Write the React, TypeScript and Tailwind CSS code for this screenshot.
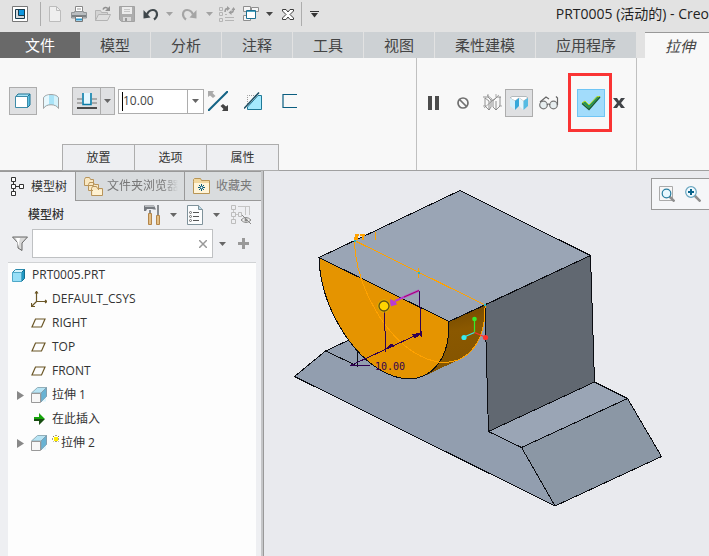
import React from "react";

type IconProps = { w?: number; h?: number; children: React.ReactNode };

function Icon({ w = 16, h = 16, children }: IconProps) {
  return (
    <svg width={w} height={h} viewBox={`0 0 ${w} ${h}`} fill="none" aria-hidden="true" className="block shrink-0">
      {children}
    </svg>
  );
}

function Caret({ color = "#666", w = 7 }: { color?: string; w?: number }) {
  return (
    <svg width={w} height="4" viewBox="0 0 7 4" aria-hidden="true" className="block shrink-0">
      <path d="M0 0h7L3.5 4z" fill={color} />
    </svg>
  );
}

function IconButton({ label, className = "", children }: { label: string; className?: string; children: React.ReactNode }) {
  return (
    <button type="button" aria-label={label} title={label} className={`flex shrink-0 items-center justify-center ${className}`}>
      {children}
    </button>
  );
}

function TitleBar() {
  return (
    <header className="flex h-8 items-center overflow-hidden pb-1">
      <IconButton label="应用程序窗口" className="h-6 w-10">
        <Icon>
          <path d="M.5.5h15v15H.5z" fill="#fff" stroke="#777" />
          <path d="M3.5 3.5h9v9h-9z" fill="#d5dade" stroke="#173b4c" />
          <path d="M6.500 3.500h6v6h-6z" fill="#0e97e0" stroke="#173b4c" />
        </Icon>
      </IconButton>
      <span className="mr-0.5 h-6 w-px bg-[#adadad]" />
      <IconButton label="新建" className="h-6 w-6">
        <Icon>
          <path d="M2.500.5h7l4 4v11h-11z" fill="#efefef" stroke="#bcbcbc" />
          <path d="M9.500.5v4h4" stroke="#bcbcbc" />
        </Icon>
      </IconButton>
      <IconButton label="打印" className="h-6 w-6">
        <Icon>
          <path d="M4.500.5h7v6h-7z" fill="#fff" stroke="#888" />
          <path d="M6 3h4" stroke="#999" />
          <path d="M.5 6.500h3v-1h9v1h3V12H.5z" fill="#b9bdc0" stroke="#909496" />
          <path d="M1 9h14v2H1z" fill="#7d8285" />
          <path d="M4.500 10.500h7v5h-7z" fill="#fff" stroke="#777" />
          <path d="M5 13.500h6" stroke="#2c9bd0" strokeWidth="2" />
        </Icon>
      </IconButton>
      <IconButton label="打开" className="h-6 w-6">
        <Icon>
          <path d="M.5 14.500v-10h5l1 2h6v3" fill="#d3d3d3" stroke="#b3b3b3" />
          <path d="M.5 14.500l3-6h12l-3 6z" fill="#dedede" stroke="#b3b3b3" />
          <path d="M8 3.500c1-2.500 3-2.500 5-1" stroke="#8f8f8f" strokeWidth="1.500" />
          <path d="M15 0v5h-5z" fill="#8f8f8f" />
        </Icon>
      </IconButton>
      <IconButton label="保存" className="h-6 w-6">
        <Icon>
          <path d="M.5.5h15v15h-13l-2-2z" fill="#adadad" stroke="#a2a2a2" />
          <path d="M3 1h10v7H3z" fill="#ececec" />
          <path d="M5 3.500h6M5 5.500h6" stroke="#c6c6c6" />
          <path d="M4 11h8v4H4z" fill="#d9d9d9" />
          <path d="M6 12h2v3H6z" fill="#999" />
        </Icon>
      </IconButton>
      <IconButton label="撤消" className="h-6 w-6">
        <Icon>
          <path d="M4 8.500C6 3 14 2 14 8.500c0 2-1 3.500-3 5" stroke="#3f474b" strokeWidth="2.200" />
          <path d="M.5 4v8.500l7-1z" fill="#3f474b" />
        </Icon>
      </IconButton>
      <IconButton label="撤消列表" className="h-6 w-3"><Caret color="#a3a3a3" /></IconButton>
      <IconButton label="重做" className="h-6 w-7">
        <Icon>
          <path d="M12 8.500C10 3 2 2 2 8.500c0 2 1 3.500 3 5" stroke="#a5a5a5" strokeWidth="2.200" />
          <path d="M15.500 4v8.500l-7-1z" fill="#a5a5a5" />
        </Icon>
      </IconButton>
      <IconButton label="重做列表" className="h-6 w-3"><Caret color="#a3a3a3" /></IconButton>
      <IconButton label="重新生成" className="h-6 w-6">
        <Icon>
          <path d="M.5 1.500h3v3h-3zM.5 6.500h3v3h-3zM.5 12.500h3v3h-3z" stroke="#b5b5b5" />
          <path d="M6 8.500h2M6 11.500h9M6 14.500h9" stroke="#b5b5b5" />
          <path d="M6 6c0-2.500 1-3.500 2.500-3.500M14.500 3c0 2.500-1 3.500-2.500 3.500" stroke="#9c9c9c" strokeWidth="1.500" />
          <path d="M8 0l3 2.500L8 5zM12.500 4l-3 2.500 3 2.500zM12.500 4l2-3 2 3z" fill="#9c9c9c" />
        </Icon>
      </IconButton>
      <IconButton label="窗口" className="h-6 w-6">
        <Icon>
          <path d="M.5.5h7v5h-7zM8.500 1.500h7v4h-7zM.5 9.500h7v5h-7z" fill="#f5f5f5" stroke="#8e8e8e" />
          <path d="M3.500 4.500h9v8h-9z" fill="#fff" stroke="#1b6f92" />
          <path d="M4 5.500h8" stroke="#4ea7c3" />
        </Icon>
      </IconButton>
      <IconButton label="窗口列表" className="h-6 w-3"><Caret color="#454545" /></IconButton>
      <IconButton label="关闭" className="h-6 w-[26px]">
        <Icon w={12} h={11}>
          <path d="M.5.500h3.500l2 2.500 2-2.500h3.500v1.500L8 5.500l3.500 3.500v1.500H8L6 8l-2 2.500H.5V9L4 5.500.5 2z" fill="#fff" stroke="#3c3c3c" />
        </Icon>
      </IconButton>
      <span className="h-6 w-px bg-[#adadad]" />
      <IconButton label="自定义快速访问工具栏" className="h-6 w-6">
        <Icon w={9} h={7}>
          <path d="M0 .5h9" stroke="#333" />
          <path d="M1 2h7L4.500 6.500z" fill="#333" />
        </Icon>
      </IconButton>
      <h1 className="ml-auto whitespace-nowrap text-[14px] leading-6 text-[#222]">PRT0005 (活动的) - Creo</h1>
    </header>
  );
}

function RibbonTabs() {
  const tab = "h-full shrink-0 bg-[#cdd1d4] text-center";
  return (
    <nav aria-label="功能区" className="flex h-[26px] gap-px text-[15px] leading-6 text-[#444]">
      <button type="button" className="-mr-px h-full w-20 shrink-0 bg-[#696969] text-white">文件</button>
      <button type="button" className={`${tab} w-[70px]`}>模型</button>
      <button type="button" className={`${tab} w-[70px]`}>分析</button>
      <button type="button" className={`${tab} w-[70px]`}>注释</button>
      <button type="button" className={`${tab} w-[70px]`}>工具</button>
      <button type="button" className={`${tab} w-[70px]`}>视图</button>
      <button type="button" className={`${tab} w-[100px]`}>柔性建模</button>
      <button type="button" className={`${tab} w-[100px]`}>应用程序</button>
      <button type="button" aria-current="page" className="ml-2 h-full min-w-16 grow border-t border-[#999] bg-[#f8f8f8] pl-5 text-left italic">
        拉伸
      </button>
    </nav>
  );
}

function Ribbon() {
  const sub = "-ml-px h-[27px] w-[73px] border border-[#adadad] bg-[#eeeff2]";
  return (
    <section aria-label="拉伸" className="flex h-[113px] border-b border-[#a0a0a0] bg-[#f8f8f8]">
      <div className="flex w-[417px] shrink-0 flex-col justify-between border-r border-[#c0c0c0]">
        <div className="flex items-center pl-[9px] pt-[29px]">
          <IconButton label="实体" className="h-7 w-7 border border-[#adadad] bg-[#dfe0e2]">
            <Icon>
              <path d="M1 3.500l2-2.500h12l-2.500 2.500z" fill="#a8e4f7" stroke="#1c7393" />
              <path d="M12 4l3-3v11l-3 3z" fill="#5cc0e4" stroke="#1c7393" />
              <path d="M.5 3.500h12v11H.5z" fill="#fff" stroke="#3f8ba8" />
            </Icon>
          </IconButton>
          <IconButton label="曲面" className="mr-[7px] h-7 w-7">
            <Icon>
              <path d="M.5 4.500C3 .5 13 .5 15.500 4.500v11c-2-5-13-5-15 0z" fill="#a9e3f7" stroke="#a2a2a2" />
              <path d="M1 5c1-2 3-2.500 5-3v9c-2 .5-4 1.500-5 3z" fill="#e8f8fd" />
              <path d="M11 2.500c2 .5 3 1 4 2.500v9c-1-1.500-2-2-4-2.500z" fill="#d5f2fb" />
            </Icon>
          </IconButton>
          <div className="mr-[3px] flex h-7 border border-[#adadad] bg-[#dfe0e2]">
            <IconButton label="盲孔" className="w-[27px]">
              <Icon w={20} h={16}>
                <path d="M0 6h20M0 10h20" stroke="#aaa" strokeWidth="2" />
                <path d="M5 0h10v12H5z" fill="#e5f8ff" />
                <path d="M6 0v11.500h8V0" stroke="#087ba7" strokeWidth="1.600" />
                <path d="M0 15h20" stroke="#4b4b4b" strokeWidth="2" />
              </Icon>
            </IconButton>
            <IconButton label="深度选项" className="w-[14px] border-l border-[#adadad]"><Caret /></IconButton>
          </div>
          <div className="mr-1 flex h-[25px] w-[86px] border border-[#adadad] bg-white">
            <input
              aria-label="深度值"
              defaultValue="10.00"
              className="my-0.5 ml-[3px] w-0 min-w-0 grow border-l border-black bg-transparent text-[12px] leading-5 text-[#444] outline-none"
            />
            <IconButton label="深度值列表" className="w-4 border-l border-[#adadad]"><Caret /></IconButton>
          </div>
          <IconButton label="反向" className="mr-4 h-7 w-5">
            <Icon w={20} h={20}>
              <path d="M0 20L20 0" stroke="#146385" strokeWidth="2" />
              <path d="M0 0h6L4.500 2l3 3L5 7 2 4.500 0 6z" fill="#aaa" />
              <path d="M20 20h-6l1.500-2-3-3 2.500-2 3 2.500 2-1.500z" fill="#444" />
            </Icon>
          </IconButton>
          <IconButton label="移除材料" className="mr-5 h-7 w-[18px]">
            <Icon w={18} h={18}>
              <path d="M3.500 12V3.500H12" stroke="#999" strokeDasharray="1 1" />
              <path d="M17.500 3.500v14H3.500V15L14 3.500z" fill="#a5eafe" stroke="#1f7997" />
              <path d="M0 16.500L15 .5" stroke="#174b60" strokeWidth="1.500" />
            </Icon>
          </IconButton>
          <IconButton label="加厚草绘" className="h-7 w-4">
            <Icon><path d="M15 1.500H1v13h14" stroke="#0b5e80" strokeWidth="1.200" /></Icon>
          </IconButton>
        </div>
        <div className="-mb-px flex pl-[63px] text-[12px] leading-6 text-[#333]">
          <button type="button" className={sub}>放置</button>
          <button type="button" className={sub}>选项</button>
          <button type="button" className={sub}>属性</button>
        </div>
      </div>
      <div className="flex w-[220px] shrink-0 items-start border-r border-[#c0c0c0] pt-[15px]">
        <div className="flex h-[59px] items-center pl-0.5">
          <IconButton label="暂停" className="h-7 w-[29px]">
            <Icon w={12} h={14}><path d="M0 0h4v14H0zM7 0h4v14H7z" fill="#4c4c4c" /></Icon>
          </IconButton>
          <IconButton label="无预览" className="h-7 w-[30px]">
            <Icon w={12} h={12}>
              <circle cx="6" cy="6" r="5" stroke="#707070" strokeWidth="1.700" />
              <path d="M2.500 2.500l7 7" stroke="#707070" strokeWidth="1.700" />
            </Icon>
          </IconButton>
          <IconButton label="未附着预览" className="h-7 w-[27px]">
            <Icon w={20} h={17}>
              <path d="M1 3h5l3 3h3l3-3h4M3 4v8l4 4V7L3 4M9 6v7l-2 3M11 6v7l3 3V7M18 3v9l-4 4" stroke="#777" strokeWidth=".8" />
              <path d="M1 12h3M17 12h3M6 0v3M14 0v3M2 14L17 1M5 1l5 4" stroke="#888" strokeWidth=".7" />
            </Icon>
          </IconButton>
          <IconButton label="附着预览" className="h-7 w-7 border border-[#adadad] bg-[#dfe0e2]">
            <Icon w={18} h={14}>
              <path d="M0 2l2-1.500h14L18 2l-4.500 3L9 2 5 5z" fill="#fff" stroke="#9aa1a5" strokeWidth=".7" />
              <path d="M0 2l5 3v9l-5-4z" fill="#d3effa" />
              <path d="M5 5l4-3v8l-4 4z" fill="#35a8da" />
              <path d="M9 2l4.500 3v9L9 10z" fill="#e3f5fc" />
              <path d="M13.500 5L18 2v8l-4.500 4z" fill="#55bbe3" />
            </Icon>
          </IconButton>
          <IconButton label="验证" className="mr-1 h-7 w-[31px]">
            <Icon w={20} h={14}>
              <circle cx="4.500" cy="9" r="3.800" fill="#e7eef0" stroke="#777" strokeWidth="1.200" />
              <circle cx="14.500" cy="9" r="3.800" fill="#e7eef0" stroke="#777" strokeWidth="1.200" />
              <path d="M8 9q1.500-2 3 0M1 6L7 1l3 2M18.500 9V2L17 .5" stroke="#666" strokeWidth="1.200" />
            </Icon>
          </IconButton>
        </div>
        <div className="flex h-[59px] w-11 items-center justify-center border-[3px] border-[#fa3434] pl-0.5">
          <IconButton label="确定" className="h-7 w-7 border border-[#6fc5f5] bg-[#a2dcfb]">
            <Icon w={20} h={16}>
              <path d="M1 8l3-2 4 4L16 1.500h3L8 14z" fill="#28955a" stroke="#b6d925" />
              <path d="M1 8.500L8 14.500 19 2" stroke="#16583a" strokeWidth="1.300" />
            </Icon>
          </IconButton>
        </div>
        <IconButton label="取消" className="h-[59px] w-[13px]">
          <Icon w={12} h={10}>
            <path d="M0 0h4l2 3 2-3h4L8 5l4 5H8L6 7l-2 3H0l4-5z" fill="#414448" />
          </Icon>
        </IconButton>
      </div>
    </section>
  );
}

function ExtrudeIcon() {
  return (
    <Icon>
      <path d="M.5 6l6-5.500h9L10 6z" fill="#b7e4f4" stroke="#91aeb9" />
      <path d="M10 6l5.500-5.500v9L10 15z" fill="#68b3d4" stroke="#819faf" />
      <path d="M11 14.500l4-4v4z" fill="#dff6ff" />
      <path d="M.5 6.500h9v9h-9z" fill="#f7f7f7" stroke="#999" />
    </Icon>
  );
}

function PlaneIcon() {
  return <Icon w={15} h={10}><path d="M4.500 1h9.500l-3.500 8H1z" stroke="#6b5727" strokeWidth="1.200" /></Icon>;
}

function TreeRow({ icon, label, expandable = false, pending = false }: { icon: React.ReactNode; label: string; expandable?: boolean; pending?: boolean }) {
  return (
    <li className="flex h-6 items-center pl-2">
      <span className="flex w-[15px] shrink-0">
        {expandable && (
          <IconButton label={`展开 ${label}`} className="h-5 w-2">
            <Icon w={8} h={9}><path d="M1 0l7 4.500L1 9z" fill="#888" /></Icon>
          </IconButton>
        )}
      </span>
      <span className="flex w-[21px] shrink-0 items-center">{icon}</span>
      {pending && (
        <span className="mr-px self-start pt-1">
          <Icon w={8} h={8}>
            <path d="M4 0v8M0 4h8M1 1l6 6M7 1L1 7" stroke="#554d00" strokeDasharray="1 1" />
            <path d="M2 2h4v4H2z" fill="#ffed00" />
          </Icon>
        </span>
      )}
      <span className="whitespace-nowrap">{label}</span>
    </li>
  );
}

function ModelTreePanel() {
  return (
    <aside aria-label="模型树" className="flex w-[264px] shrink-0 flex-col border-r border-[#999] text-[12px] leading-6 text-[#333]">
      <div className="flex grow flex-col border-r-2 border-[#c5c6c8] bg-[#eeeff2]">
        <div className="flex h-[30px] border-t border-[#999]">
          <button type="button" className="flex w-[75px] shrink-0 items-center gap-[7px] bg-[#eeeff2] pl-[11px]">
            <Icon w={13} h={19}>
              <path d="M.5.500h4v4h-4zM.5 7.500h4v4h-4zM.5 14.500h4v4h-4zM8.500 7.500h4v4h-4z" fill="#fff" stroke="#333" />
              <path d="M2.500 5v2M2.500 12v2M5 9.500h3" stroke="#333" />
            </Icon>
            <span className="whitespace-nowrap">模型树</span>
          </button>
          <button type="button" className="flex w-[109px] shrink-0 items-center gap-1 overflow-hidden border-b border-l border-[#999] bg-[#d9dcde] pl-2 text-[#777]">
            <Icon w={19} h={19}>
              <path d="M.5 2.500l1-2h4l1 2h3v6h-9zM4.500 7.500l1-2h4l1 2h4v6h-10zM7.500 11.500l1-2h4l1 2h5v7h-11z" fill="#f9e8c2" stroke="#b8945a" />
              <path d="M9 13h9v5H9z" fill="#fff2d2" />
            </Icon>
            <span className="w-[71px] overflow-hidden whitespace-nowrap [mask-image:linear-gradient(90deg,#000_80%,transparent)]">文件夹浏览器</span>
          </button>
          <button type="button" className="flex grow items-center gap-1.5 border-b border-l border-[#999] bg-[#d9dcde] pl-2 text-[#777]">
            <Icon w={17} h={16}>
              <path d="M.5 3.500v-2l1-1h6l1 2h8v13H.5z" fill="#f1d79e" stroke="#b89555" />
              <path d="M1 5h15v10H1z" fill="#fff4d8" />
              <path d="M8.500 6v7M5 9.500h7M6 7l5 5M11 7l-5 5" stroke="#075c7a" />
              <circle cx="8.500" cy="9.500" r="1" fill="#fff" />
            </Icon>
            <span className="whitespace-nowrap">收藏夹</span>
          </button>
        </div>
        <div className="flex h-7 items-center pl-7">
          <h2 className="w-[115px] font-medium">模型树</h2>
          <IconButton label="设置" className="h-6 w-[19px]">
            <Icon w={17} h={20}>
              <path d="M0 .5h10l2 4h-2L8 4H3L2 6H0z" fill="#75797f" />
              <path d="M1 1.500h9" stroke="#b9bdc0" />
              <path d="M5 5h2v5H5zM13 0h2v10h-2z" fill="#878b8f" />
              <path d="M4.500 8.500h3v11h-3zM12.500 10.500h3v9h-3z" fill="#e3be85" stroke="#b3854a" />
            </Icon>
          </IconButton>
          <IconButton label="设置列表" className="h-6 w-[23px]"><Caret /></IconButton>
          <IconButton label="显示" className="h-6 w-5">
            <Icon w={16} h={20}>
              <path d="M.5.500h11l4 4v15H.5z" fill="#fcfdfe" stroke="#7f929b" />
              <path d="M11.500.500v4h4" fill="#b7d7e5" stroke="#7f929b" />
              <path d="M6 7.500h6M6 11.500h6M6 15.500h6" stroke="#555" />
              <circle cx="3.500" cy="7.500" r="1" stroke="#555" strokeWidth=".8" />
              <circle cx="3.500" cy="11.500" r="1" stroke="#555" strokeWidth=".8" />
              <circle cx="3.500" cy="15.500" r="1" stroke="#555" strokeWidth=".8" />
            </Icon>
          </IconButton>
          <IconButton label="显示列表" className="h-6 w-[22px]"><Caret /></IconButton>
          <IconButton label="隐藏项" className="h-6 w-7">
            <Icon w={20} h={20}>
              <path d="M.5.500h4v4h-4zM.5 7.500h4v4h-4zM.5 14.500h4v4h-4zM7.500 7.500h3v4h-3z" stroke="#bdbdbd" />
              <path d="M2.500 5v2M2.500 12v2M5 9.500h2M7 1.500h12M14.500 2v8M18.500 2v8" stroke="#c5c5c5" />
              <path d="M10 15q5-5 10 0q-5 5-10 0z" fill="#eee" stroke="#888" />
              <circle cx="15" cy="15" r="1.500" fill="#888" />
              <path d="M11 10l9 9" stroke="#888" />
            </Icon>
          </IconButton>
        </div>
        <div className="flex items-center pl-3">
          <IconButton label="过滤器" className="mr-1 h-7 w-4">
            <Icon w={16} h={15}>
              <path d="M.5 1h15l-5.500 6v7.500L6 12V7z" fill="#dadada" stroke="#666" />
              <path d="M4 2h4l-1 5v4" fill="#fff" />
            </Icon>
          </IconButton>
          <div className="flex h-[29px] w-[181px] items-center border border-[#bfc1c3] bg-white">
            <input aria-label="搜索模型树" type="text" className="h-full w-0 min-w-0 grow bg-transparent px-1 outline-none" />
            <IconButton label="清除" className="h-6 w-[18px]">
              <Icon w={8} h={8}><path d="M0 0l8 8M8 0L0 8" stroke="#999" strokeWidth="1.500" /></Icon>
            </IconButton>
          </div>
          <IconButton label="搜索选项" className="h-6 w-[19px]"><Caret /></IconButton>
          <IconButton label="添加" className="h-6 w-[22px]">
            <Icon w={11} h={11}><path d="M5.500 0v11M0 5.500h11" stroke="#999" strokeWidth="3" /></Icon>
          </IconButton>
        </div>
        <ul className="ml-2 mr-[5px] mt-1 grow border-t border-[#d0d2d4] bg-[#fdfdfd]">
          <li className="flex h-6 items-center gap-[7px] pl-1">
            <Icon w={13} h={13}>
              <path d="M.5 3.500l3-3h9l-3 3z" fill="#d4f4fd" stroke="#2c8bad" />
              <path d="M9.500 3.500l3-3v9l-3 3z" fill="#2299c3" stroke="#126f91" />
              <path d="M.5 3.500h9v9h-9z" fill="#97dff7" stroke="#4fa8c8" />
            </Icon>
            <span>PRT0005.PRT</span>
          </li>
          <TreeRow
            label="DEFAULT_CSYS"
            icon={
              <Icon>
                <path d="M5.500 0v10.500H16M5.500 10.500L1 15M4 2.500L5.500.5 7 2.500M14 9l2 1.500-2 1.500M.5 12v3.500H4" stroke="#6b5727" strokeWidth="1.200" />
              </Icon>
            }
          />
          <TreeRow label="RIGHT" icon={<PlaneIcon />} />
          <TreeRow label="TOP" icon={<PlaneIcon />} />
          <TreeRow label="FRONT" icon={<PlaneIcon />} />
          <TreeRow label="拉伸 1" icon={<ExtrudeIcon />} expandable />
          <TreeRow
            label="在此插入"
            icon={
              <Icon w={16} h={12}>
                <path d="M3 4h5V0l6 6H3z" fill="#16a50b" />
                <path d="M3 6h11l-6 6V8H3z" fill="#174d11" />
              </Icon>
            }
          />
          <TreeRow label="拉伸 2" icon={<ExtrudeIcon />} expandable pending />
        </ul>
      </div>
    </aside>
  );
}

function ModelDrawing() {
  return (
    <svg width="445" height="385" viewBox="264 171 445 385" fill="none" role="img" aria-label="拉伸特征预览" className="block">
      <defs>
        <linearGradient id="inner" x1="455" y1="315" x2="465" y2="365" gradientUnits="userSpaceOnUse">
          <stop offset="0" stopColor="#7b4e00" />
          <stop offset=".3" stopColor="#8a5800" />
          <stop offset="1" stopColor="#855500" />
        </linearGradient>
      </defs>
      <g stroke="#0b0d12" strokeLinejoin="round" shapeRendering="crispEdges">
        <path d="M294.500 376.500L325.500 351 349 340 400 320 485 305 488.500 431.500 521.500 447.500 555 506z" fill="#929eaf" stroke="none" />
        <path d="M349 340L325.500 351 294.500 376.500 555 506" />
        <path d="M325.500 351L357.500 366V348" />
        <path d="M521.500 447.500L627.500 398.500 661.500 456.500 555 506z" fill="#8b97a5" />
        <path d="M488.500 431.500L594.500 382 627.500 398.500 521.500 447.500z" fill="#9aa5b5" />
        <path d="M485 305L590.500 255.500 594.500 382 488.500 431.500z" fill="#616871" />
        <path d="M319 257.500L460 190.500 590.500 255.500 449 321.500z" fill="#9aa5b5" />
        <path d="M449 321.500L485 305C486 331 478 350 464 357L427 375z" fill="url(#inner)" stroke="none" />
        <path d="M319 257.500L449 321.500C450 367.500 422 390.500 386 373 350 355.500 320 303.500 319 257.500z" fill="#e59400" />
        <path d="M449 321.500L485 305" />
      </g>
      <g shapeRendering="crispEdges">
        <path d="M354.500 240.500L485 305C486 351 457.500 374 421.500 356.500 386 339 355.500 287 354.500 240.500" stroke="#ffa200" />
        <path d="M375.500 232v8M418.500 268v10M416 271h4" stroke="#ffa200" />
        <path d="M355 234h4v2h-1v4h-4v-3h1zM360 234h5v2h-1v4h-2v-4h-2z" fill="#ffa200" />
        <path d="M353.500 240.500h2M418 273h2M484 305h2" stroke="#20b9c2" strokeWidth="2" />
        <g stroke="#300052">
          <path d="M384.500 308l1 44M419.500 291l1.500 45M421.500 331v6M350.500 365.500L421 333M351 365.500h19" />
          <path d="M386 349l5-5 3 2zM421 333l-8 1.500 2 3.500z" fill="#300052" />
        </g>
      </g>
      <path d="M419 290.500L395 301" stroke="#b93bd1" strokeWidth="2" />
      <path d="M419 290.500L404 297" stroke="#a30c65" />
      <path d="M390 299l5.500 2.500 1.500 3-6.500 2z" fill="#b93bd1" />
      <circle cx="384" cy="306" r="6" stroke="#e0c000" />
      <circle cx="384" cy="306" r="5" fill="#ffd500" stroke="#625214" strokeWidth="1.300" />
      <text x="375" y="370" fill="#300052" className="font-['DejaVu_Sans_Mono',monospace] text-[10px]">10.00</text>
      <path d="M474.500 332.500V319" stroke="#34ed2a" strokeWidth="1.200" />
      <path d="M474.500 332.500L464 337" stroke="#36ecf0" strokeWidth="1.200" />
      <path d="M474.500 332.500L485 337" stroke="#ff302c" strokeWidth="1.200" />
      <circle cx="474.500" cy="319" r="2.300" fill="#34ed2a" />
      <circle cx="464" cy="337.500" r="2.600" fill="#36ecf0" />
      <circle cx="485.500" cy="337.500" r="2.600" fill="#ff302c" />
    </svg>
  );
}

function Viewport() {
  return (
    <main className="relative min-w-0 grow overflow-hidden bg-[#e9eaee]">
      <ModelDrawing />
      <div role="toolbar" aria-label="视图工具" className="absolute right-0 top-[7px] flex h-8 w-[58px] items-center border border-r-0 border-[#999] bg-[#f5f6f8] pl-0.5">
        <IconButton label="重新调整" className="h-7 w-[26px]">
          <Icon>
            <path d="M.5.500h13v14H.5z" fill="#f7f7f7" stroke="#aaa" />
            <path d="M10.500 10.500l5 5" stroke="#8e8e8e" strokeWidth="2.500" />
            <circle cx="7.500" cy="7.500" r="4.300" fill="#e8f8ff" stroke="#277da1" strokeWidth="1.200" />
          </Icon>
        </IconButton>
        <IconButton label="放大" className="h-7 w-[26px]">
          <Icon>
            <path d="M9.500 9.500l6 6" stroke="#8e8e8e" strokeWidth="2.500" />
            <circle cx="6" cy="6" r="5.300" fill="#f2fbff" stroke="#6aa6c0" strokeWidth="1.200" />
            <path d="M6 3v6M3 6h6" stroke="#08638c" strokeWidth="2" />
          </Icon>
        </IconButton>
      </div>
    </main>
  );
}

export default function App() {
  return (
    <div className="flex min-h-screen flex-col overflow-hidden bg-[#e2e2e2] font-['Open_Sans','Noto_Sans_CJK_SC',sans-serif]">
      <TitleBar />
      <RibbonTabs />
      <Ribbon />
      <div className="flex grow">
        <ModelTreePanel />
        <Viewport />
      </div>
    </div>
  );
}
